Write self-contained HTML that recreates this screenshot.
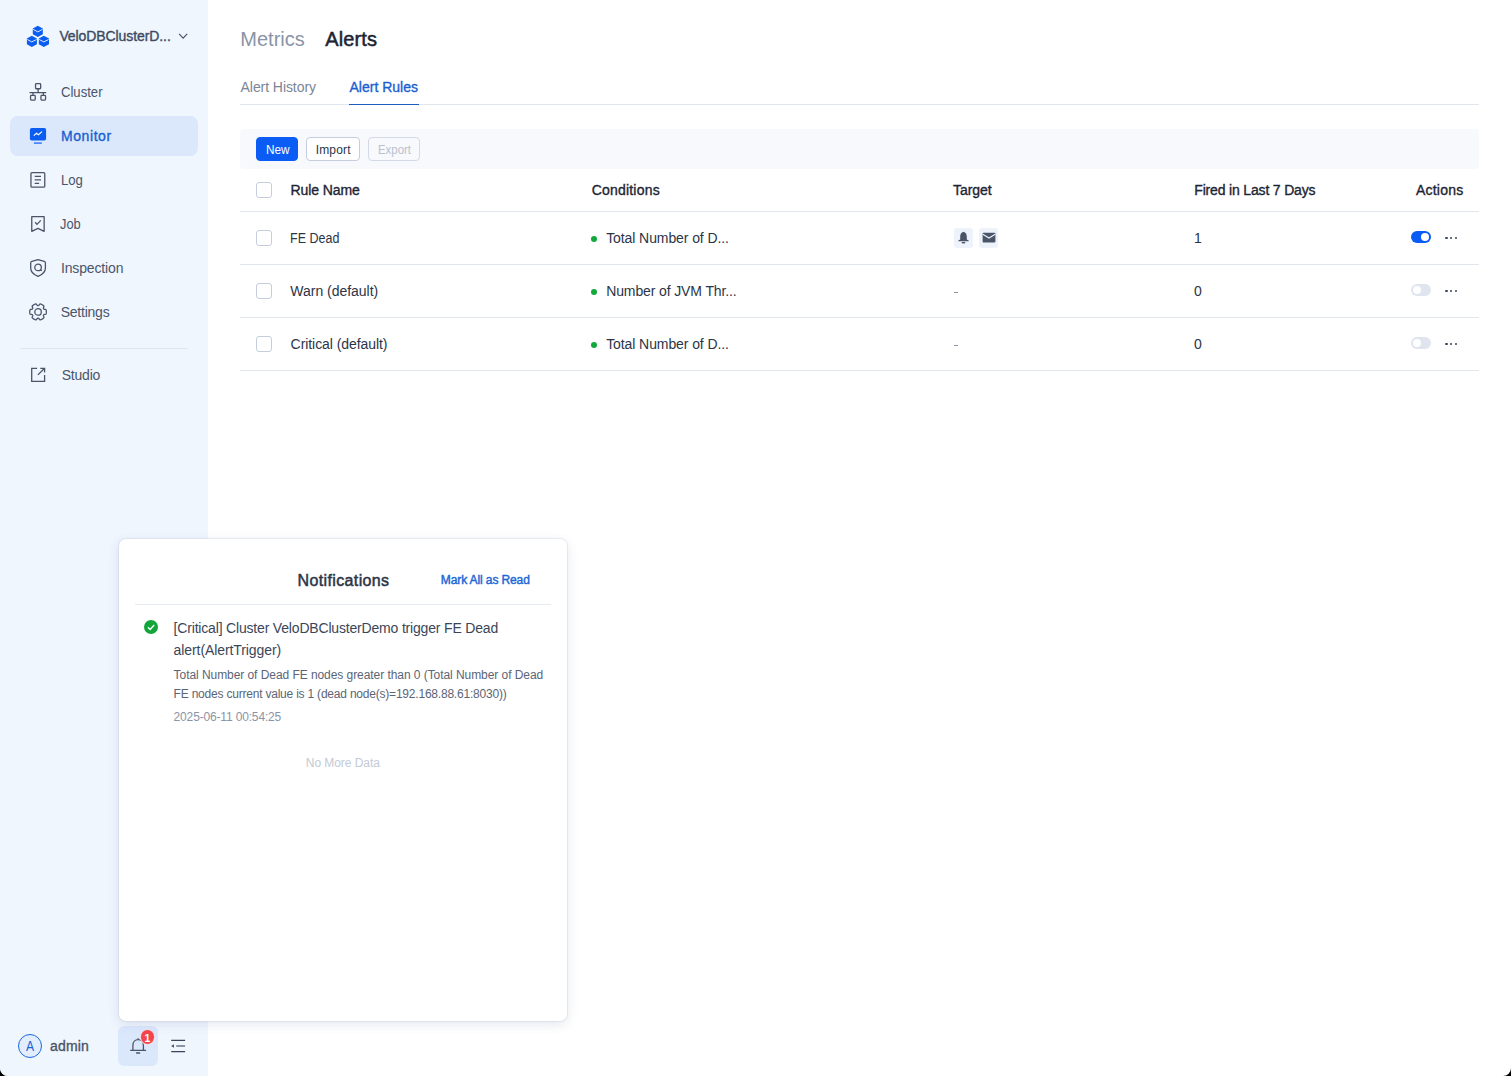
<!DOCTYPE html>
<html lang="en">
<head>
<meta charset="utf-8">
<title>Alerts</title>
<style>
*{box-sizing:border-box;margin:0;padding:0}
html,body{width:1511px;height:1076px;overflow:hidden;background:#000}
body{font-family:"Liberation Sans",sans-serif;color:#3a4659;position:relative}
#app{position:absolute;left:0;top:0;width:1511px;height:1076px;background:#fff;border-radius:0 0 8px 8px;overflow:hidden}
.abs{position:absolute;white-space:nowrap}
#side{position:absolute;left:0;top:0;width:208px;height:1076px;background:#f0f6fe}
.t{position:absolute;white-space:pre;line-height:20px}
.s{-webkit-text-stroke:0.35px currentColor}
.s2{-webkit-text-stroke:0.5px currentColor}
.s3{-webkit-text-stroke:0.42px currentColor}
.b{font-weight:bold}
#active{position:absolute;left:10px;top:116px;width:188px;height:40px;border-radius:8px;background:#dbe8fc}
.hr{position:absolute;background:#e1e6ef;height:1px}
.cb{position:absolute;left:256px;width:16px;height:16px;border:1px solid #c5cedd;border-radius:3px;background:#fff}
.dot{position:absolute;left:590.7px;width:6.7px;height:6.7px;border-radius:50%;background:#12a83a}
.sw{position:absolute;left:1411px;width:20px;height:12px;border-radius:6px;background:#dfe4ee}
.sw i{position:absolute;left:1.8px;top:1.8px;width:8.4px;height:8.4px;border-radius:50%;background:#fff}
.sw.on{background:#0b5cf5}
.sw.on i{left:9.8px}
.more{position:absolute;left:1445.4px;width:12px;height:2.4px}
.more b{position:absolute;top:0;width:2.4px;height:2.4px;border-radius:50%;background:#3a4659}
.btn{position:absolute;top:137px;height:24px;border-radius:4px;border:1px solid #c5cedd;background:#fff}
.dash{position:absolute;left:954px;width:4px;height:1px;background:#8a94a6}
#pop{position:absolute;left:119px;top:539px;width:448px;height:482px;background:#fff;border-radius:7px;box-shadow:0 0 0 1px rgba(190,200,220,.3),0 3px 12px rgba(60,80,130,.14)}
</style>
</head>
<body>
<div id="app">

<!-- SIDEBAR -->
<div id="side">
  <svg class="abs" style="left:26px;top:24px" width="24" height="24" viewBox="0 0 24 24">
    <g fill="#0b5cf0">
      <path d="M11.8 1.8 L16.8 4.4 V10.2 L11.8 12.9 L6.8 10.2 V4.4 Z"/>
      <path d="M5.8 11.8 L10.9 14.5 V20.3 L5.8 23 L0.9 20.3 V14.5 Z"/>
      <path d="M17.8 11.8 L23 14.5 V20.3 L17.8 23 L12.8 20.3 V14.5 Z"/>
    </g>
    <g fill="none" stroke="#dcebff" stroke-width="1">
      <path d="M7.2 5.4 L11.8 7.9 L16.4 5.4"/>
      <path d="M1.3 15.5 L5.8 17.9 L10.5 15.5"/>
      <path d="M13.2 15.5 L17.8 17.9 L22.6 15.5"/>
    </g>
  </svg>
  <div id="sbt" class="t s" style="left:59.4px;top:25.8px;font-size:14px;color:#3d4a5f;letter-spacing:-0.09px">VeloDBClusterD...</div>
  <svg class="abs" style="left:177px;top:31px" width="12" height="10" viewBox="0 0 12 10"><path d="M2.1 2.9 L6.15 7.2 L10.2 2.9" fill="none" stroke="#4a5568" stroke-width="1.2"/></svg>

  <div id="active"></div>

  <!-- Cluster -->
  <svg class="abs" style="left:27px;top:81px" width="22" height="22" viewBox="0 0 22 22" fill="none" stroke="#4a5568" stroke-width="1.3"><rect x="8.55" y="2.65" width="5.1" height="5.1" rx="0.8"/><rect x="3.55" y="14.35" width="4.7" height="4.8" rx="0.8"/><rect x="13.95" y="14.35" width="4.6" height="4.8" rx="0.8"/><path d="M11.1 7.75 V11.7 M2.5 11.7 H19.2 M5.95 11.7 V14.35 M16.35 11.7 V14.35"/></svg>
  <div id="m1" class="t" style="left:60.5px;top:82.0px;font-size:14px;color:#4a5568;transform:scaleX(0.936);transform-origin:0 0">Cluster</div>

  <!-- Monitor -->
  <svg class="abs" style="left:27px;top:125px" width="22" height="22" viewBox="0 0 22 22"><rect x="2.9" y="3" width="16.2" height="12.5" rx="1.8" fill="#0b5cf0"/><path d="M6.9 18.1 H14.8" stroke="#3d7df5" stroke-width="1.6" fill="none"/><path d="M6.8 10.6 L9.4 8.3 L11.4 9.7 L15 6.6" stroke="#fff" stroke-width="1.2" fill="none"/></svg>
  <div id="m2" class="t s" style="left:60.9px;top:126.0px;font-size:14px;color:#1a5fd0;letter-spacing:0.6px">Monitor</div>

  <!-- Log -->
  <svg class="abs" style="left:27px;top:169px" width="22" height="22" viewBox="0 0 22 22" fill="none" stroke="#4a5568" stroke-width="1.3"><rect x="3.95" y="3.55" width="13.8" height="14.6" rx="1"/><path d="M7.7 7.3 H14 M7.7 10.9 H14 M7.7 14.3 H12.1"/></svg>
  <div id="m3" class="t" style="left:60.7px;top:170.0px;font-size:14px;color:#4a5568;transform:scaleX(0.939);transform-origin:0 0">Log</div>

  <!-- Job -->
  <svg class="abs" style="left:27px;top:213px" width="22" height="22" viewBox="0 0 22 22" fill="none" stroke="#4a5568" stroke-width="1.3"><path d="M4.75 3.65 H17.15 V18.3 L10.95 15.3 L4.75 18.3 Z" stroke-linejoin="round"/><path d="M8.1 9.3 L10 11.4 L13.8 7.4"/></svg>
  <div id="m4" class="t" style="left:60.1px;top:214.0px;font-size:14px;color:#4a5568;transform:scaleX(0.917);transform-origin:0 0">Job</div>

  <!-- Inspection -->
  <svg class="abs" style="left:27px;top:257px" width="22" height="22" viewBox="0 0 22 22" fill="none" stroke="#4a5568" stroke-width="1.3"><path d="M11.05 2.6 L4.9 4.45 Q3.7 4.8 3.7 6 V11 C3.7 15 7 17.8 11.05 19.4 C15.1 17.8 18.4 15 18.4 11 V6 Q18.4 4.8 17.2 4.45 Z" stroke-linejoin="round"/><circle cx="11.05" cy="10.4" r="3.25"/><path d="M13.35 12.7 L14.9 13.8"/></svg>
  <div id="m5" class="t" style="left:60.9px;top:258.0px;font-size:14px;color:#4a5568;letter-spacing:-0.14px">Inspection</div>

  <!-- Settings -->
  <svg class="abs" style="left:27px;top:301px" width="22" height="22" viewBox="0 0 22 22" fill="none" stroke="#4a5568" stroke-width="1.3"><g transform="translate(11.05 10.9)"><path d="M0.00 -6.33 L0.11 -6.34 L0.22 -6.35 L0.33 -6.36 L0.45 -6.40 L0.56 -6.45 L0.69 -6.53 L0.82 -6.65 L0.96 -6.82 L1.12 -7.04 L1.29 -7.29 L1.46 -7.53 L1.64 -7.73 L1.81 -7.85 L1.98 -7.92 L2.13 -7.95 L2.28 -7.94 L2.42 -7.92 L2.56 -7.88 L2.70 -7.84 L2.84 -7.80 L2.97 -7.75 L3.11 -7.69 L3.24 -7.64 L3.38 -7.58 L3.51 -7.52 L3.64 -7.46 L3.77 -7.40 L3.90 -7.33 L4.02 -7.26 L4.15 -7.19 L4.27 -7.11 L4.40 -7.04 L4.52 -6.96 L4.64 -6.88 L4.76 -6.80 L4.88 -6.71 L4.99 -6.63 L5.11 -6.54 L5.22 -6.45 L5.33 -6.36 L5.44 -6.26 L5.55 -6.16 L5.65 -6.05 L5.74 -5.94 L5.82 -5.82 L5.87 -5.67 L5.90 -5.50 L5.87 -5.29 L5.79 -5.04 L5.67 -4.76 L5.54 -4.49 L5.43 -4.24 L5.35 -4.03 L5.31 -3.86 L5.30 -3.71 L5.32 -3.59 L5.35 -3.47 L5.38 -3.36 L5.43 -3.26 L5.48 -3.17 L5.54 -3.07 L5.61 -2.98 L5.68 -2.89 L5.76 -2.81 L5.87 -2.74 L6.00 -2.67 L6.17 -2.62 L6.39 -2.58 L6.66 -2.56 L6.96 -2.53 L7.26 -2.50 L7.51 -2.44 L7.71 -2.36 L7.85 -2.25 L7.95 -2.13 L8.01 -2.00 L8.07 -1.86 L8.11 -1.72 L8.14 -1.58 L8.17 -1.44 L8.20 -1.30 L8.22 -1.15 L8.24 -1.01 L8.25 -0.87 L8.27 -0.72 L8.28 -0.58 L8.29 -0.43 L8.29 -0.29 L8.30 -0.14 L8.30 -0.00 L8.30 0.14 L8.29 0.29 L8.29 0.43 L8.28 0.58 L8.27 0.72 L8.25 0.87 L8.24 1.01 L8.22 1.15 L8.20 1.30 L8.17 1.44 L8.14 1.58 L8.11 1.72 L8.07 1.86 L8.01 2.00 L7.95 2.13 L7.85 2.25 L7.71 2.36 L7.51 2.44 L7.26 2.50 L6.96 2.53 L6.66 2.56 L6.39 2.58 L6.17 2.62 L6.00 2.67 L5.87 2.74 L5.76 2.81 L5.68 2.89 L5.61 2.98 L5.54 3.07 L5.48 3.17 L5.43 3.26 L5.38 3.36 L5.35 3.47 L5.32 3.59 L5.30 3.71 L5.31 3.86 L5.35 4.03 L5.43 4.24 L5.54 4.49 L5.67 4.76 L5.79 5.04 L5.87 5.29 L5.90 5.50 L5.87 5.67 L5.82 5.82 L5.74 5.94 L5.65 6.05 L5.55 6.16 L5.44 6.26 L5.33 6.36 L5.22 6.45 L5.11 6.54 L4.99 6.63 L4.88 6.71 L4.76 6.80 L4.64 6.88 L4.52 6.96 L4.40 7.04 L4.27 7.11 L4.15 7.19 L4.02 7.26 L3.90 7.33 L3.77 7.40 L3.64 7.46 L3.51 7.52 L3.38 7.58 L3.24 7.64 L3.11 7.69 L2.97 7.75 L2.84 7.80 L2.70 7.84 L2.56 7.88 L2.42 7.92 L2.28 7.94 L2.13 7.95 L1.98 7.92 L1.81 7.85 L1.64 7.73 L1.46 7.53 L1.29 7.29 L1.12 7.04 L0.96 6.82 L0.82 6.65 L0.69 6.53 L0.56 6.45 L0.45 6.40 L0.33 6.36 L0.22 6.35 L0.11 6.34 L0.00 6.33 L-0.11 6.34 L-0.22 6.35 L-0.33 6.36 L-0.45 6.40 L-0.56 6.45 L-0.69 6.53 L-0.82 6.65 L-0.96 6.82 L-1.12 7.04 L-1.29 7.29 L-1.46 7.53 L-1.64 7.73 L-1.81 7.85 L-1.98 7.92 L-2.13 7.95 L-2.28 7.94 L-2.42 7.92 L-2.56 7.88 L-2.70 7.84 L-2.84 7.80 L-2.97 7.75 L-3.11 7.69 L-3.24 7.64 L-3.38 7.58 L-3.51 7.52 L-3.64 7.46 L-3.77 7.40 L-3.90 7.33 L-4.02 7.26 L-4.15 7.19 L-4.27 7.11 L-4.40 7.04 L-4.52 6.96 L-4.64 6.88 L-4.76 6.80 L-4.88 6.71 L-4.99 6.63 L-5.11 6.54 L-5.22 6.45 L-5.33 6.36 L-5.44 6.26 L-5.55 6.16 L-5.65 6.05 L-5.74 5.94 L-5.82 5.82 L-5.87 5.67 L-5.90 5.50 L-5.87 5.29 L-5.79 5.04 L-5.67 4.76 L-5.54 4.49 L-5.43 4.24 L-5.35 4.03 L-5.31 3.86 L-5.30 3.71 L-5.32 3.59 L-5.35 3.47 L-5.38 3.36 L-5.43 3.26 L-5.48 3.17 L-5.54 3.07 L-5.61 2.98 L-5.68 2.89 L-5.76 2.81 L-5.87 2.74 L-6.00 2.67 L-6.17 2.62 L-6.39 2.58 L-6.66 2.56 L-6.96 2.53 L-7.26 2.50 L-7.51 2.44 L-7.71 2.36 L-7.85 2.25 L-7.95 2.13 L-8.01 2.00 L-8.07 1.86 L-8.11 1.72 L-8.14 1.58 L-8.17 1.44 L-8.20 1.30 L-8.22 1.15 L-8.24 1.01 L-8.25 0.87 L-8.27 0.72 L-8.28 0.58 L-8.29 0.43 L-8.29 0.29 L-8.30 0.14 L-8.30 0.00 L-8.30 -0.14 L-8.29 -0.29 L-8.29 -0.43 L-8.28 -0.58 L-8.27 -0.72 L-8.25 -0.87 L-8.24 -1.01 L-8.22 -1.15 L-8.20 -1.30 L-8.17 -1.44 L-8.14 -1.58 L-8.11 -1.72 L-8.07 -1.86 L-8.01 -2.00 L-7.95 -2.13 L-7.85 -2.25 L-7.71 -2.36 L-7.51 -2.44 L-7.26 -2.50 L-6.96 -2.53 L-6.66 -2.56 L-6.39 -2.58 L-6.17 -2.62 L-6.00 -2.67 L-5.87 -2.74 L-5.76 -2.81 L-5.68 -2.89 L-5.61 -2.98 L-5.54 -3.07 L-5.48 -3.17 L-5.43 -3.26 L-5.38 -3.36 L-5.35 -3.47 L-5.32 -3.59 L-5.30 -3.71 L-5.31 -3.86 L-5.35 -4.03 L-5.43 -4.24 L-5.54 -4.49 L-5.67 -4.76 L-5.79 -5.04 L-5.87 -5.29 L-5.90 -5.50 L-5.87 -5.67 L-5.82 -5.82 L-5.74 -5.94 L-5.65 -6.05 L-5.55 -6.16 L-5.44 -6.26 L-5.33 -6.36 L-5.22 -6.45 L-5.11 -6.54 L-4.99 -6.63 L-4.88 -6.71 L-4.76 -6.80 L-4.64 -6.88 L-4.52 -6.96 L-4.40 -7.04 L-4.27 -7.11 L-4.15 -7.19 L-4.02 -7.26 L-3.90 -7.33 L-3.77 -7.40 L-3.64 -7.46 L-3.51 -7.52 L-3.38 -7.58 L-3.24 -7.64 L-3.11 -7.69 L-2.97 -7.75 L-2.84 -7.80 L-2.70 -7.84 L-2.56 -7.88 L-2.42 -7.92 L-2.28 -7.94 L-2.13 -7.95 L-1.98 -7.92 L-1.81 -7.85 L-1.64 -7.73 L-1.46 -7.53 L-1.29 -7.29 L-1.12 -7.04 L-0.96 -6.82 L-0.82 -6.65 L-0.69 -6.53 L-0.56 -6.45 L-0.45 -6.40 L-0.33 -6.36 L-0.22 -6.35 L-0.11 -6.34 L-0.00 -6.33 Z" stroke-linejoin="round"/></g><circle cx="11.05" cy="10.9" r="3.25"/></svg>
  <div id="m6" class="t" style="left:60.7px;top:302.0px;font-size:14px;color:#4a5568;letter-spacing:-0.23px">Settings</div>

  <div class="hr" style="left:20px;top:348px;width:168px;background:#dfe6f0"></div>

  <!-- Studio -->
  <svg class="abs" style="left:27px;top:364px" width="22" height="22" viewBox="0 0 22 22" fill="none" stroke="#4a5568" stroke-width="1.3"><path d="M10.1 4.3 H4.7 V17.4 H17.6 V10.9"/><path d="M13.3 4.3 H17.6 V8.6 M17.6 4.3 L10.9 10.9"/></svg>
  <div id="m7" class="t" style="left:61.7px;top:364.7px;font-size:14px;color:#4a5568;letter-spacing:-0.2px">Studio</div>

  <!-- bottom -->
  <div class="abs" style="left:18px;top:1034px;width:24px;height:24px;border-radius:50%;border:1px solid #1a66e0;background:#e2eefe"></div>
  <div id="avA" class="t" style="left:25.9px;top:1035.8px;font-size:14px;color:#1a5fd0;transform:scaleX(0.87);transform-origin:0 0">A</div>
  <div id="adm" class="t s" style="left:50.1px;top:1035.8px;font-size:14px;color:#4a5568;letter-spacing:0.16px">admin</div>
  <div class="abs" style="left:118px;top:1026px;width:40px;height:40px;border-radius:6px;background:#dbe8fc"></div>
  <svg class="abs" style="left:128px;top:1036px" width="20" height="20" viewBox="0 0 20 20" fill="none" stroke="#4a5568" stroke-width="1.3"><path d="M2.2 14.4 H18.1 M4.9 14.4 V9.4 C4.9 6 7.2 3.7 10.15 3.7 C13.1 3.7 15.4 6 15.4 9.4 V14.4 M10.15 3.7 V2.3 M8.1 17 H12.1"/></svg>
  <div class="abs" style="left:139.95px;top:1029.45px;width:15.2px;height:15.2px;border-radius:50%;background:#f5454c;border:0.8px solid #f4f0f8"></div>
  <div class="t b" style="left:144.5px;top:1028.3px;font-size:10.5px;color:#fff">1</div>
  <svg class="abs" style="left:168px;top:1036px" width="20" height="20" viewBox="0 0 20 20" fill="none" stroke="#3a4659" stroke-width="1.3"><path d="M3.2 4.4 H17.1 M3.2 15.6 H17.1"/><path d="M8.2 10 H17.1" stroke="#6b7587"/><path d="M5.9 8.2 V11.8 L3.2 10 Z" fill="#3a4659" stroke="none"/></svg>
</div>

<!-- MAIN -->
<div id="h1" class="t" style="left:240.2px;top:28.8px;font-size:20px;color:#8a94a6;letter-spacing:0.04px">Metrics</div>
<div id="h2" class="t s2" style="left:325.3px;top:28.8px;font-size:20px;color:#1d2433;letter-spacing:0.12px">Alerts</div>
<div id="tb1" class="t" style="left:240.6px;top:77.1px;font-size:14px;color:#7b8596;letter-spacing:-0.07px">Alert History</div>
<div id="tb2" class="t s" style="left:349.5px;top:77.1px;font-size:14px;color:#1a5fd0">Alert Rules</div>
<div class="hr" style="left:240px;top:104px;width:1239px"></div>
<div class="abs" style="left:349.2px;top:103.7px;width:69.7px;height:1.8px;background:#1f5cc4"></div>

<div class="abs" style="left:240px;top:129px;width:1239px;height:40px;border-radius:4px;background:#f7f9fd"></div>
<div class="btn" style="left:256px;width:42px;background:#0b5cf5;border-color:#0b5cf5"></div>
<div class="btn" style="left:306px;width:54px"></div>
<div class="btn" style="left:368px;width:52px;border-color:#d3dae6;background:#f7f9fd"></div>
<div id="b1" class="t" style="left:265.6px;top:139.9px;font-size:12px;color:#ffffff;transform:scaleX(0.983);transform-origin:0 0">New</div>
<div id="b2" class="t" style="left:315.7px;top:139.9px;font-size:12px;color:#2b3547;letter-spacing:0.16px">Import</div>
<div id="b3" class="t" style="left:377.7px;top:139.9px;font-size:12px;color:#b9c1cf;transform:scaleX(0.951);transform-origin:0 0">Export</div>

<!-- header -->
<div class="cb" style="top:182px"></div>
<div id="th1" class="t s" style="left:290.4px;top:179.8px;font-size:14px;color:#1d2433;letter-spacing:-0.07px">Rule Name</div>
<div id="th2" class="t s" style="left:591.7px;top:179.8px;font-size:14px;color:#1d2433;letter-spacing:0.2px">Conditions</div>
<div id="th3" class="t s" style="left:953.1px;top:179.8px;font-size:14px;color:#1d2433;letter-spacing:-0.08px">Target</div>
<div id="th4" class="t s" style="left:1194.3px;top:179.8px;font-size:14px;color:#1d2433;letter-spacing:-0.17px">Fired in Last 7 Days</div>
<div id="th5" class="t s" style="left:1415.9px;top:179.8px;font-size:14px;color:#1d2433;letter-spacing:0.23px">Actions</div>
<div class="hr" style="left:240px;top:211px;width:1239px"></div>

<!-- row 1 -->
<div class="cb" style="top:230px"></div>
<div id="r1a" class="t" style="left:290.0px;top:227.8px;font-size:14px;color:#2b3547;transform:scaleX(0.893);transform-origin:0 0">FE Dead</div>
<div class="dot" style="top:235.6px"></div>
<div id="r1b" class="t" style="left:606.2px;top:227.8px;font-size:14px;color:#2b3547;letter-spacing:-0.09px">Total Number of D...</div>
<div class="abs" style="left:953.6px;top:228px;width:19.6px;height:19.9px;border-radius:3px;background:#eef2fa"></div>
<svg class="abs" style="left:957px;top:231px" width="13" height="14" viewBox="0 0 13 14"><path d="M6.5 0.8 C4.2 1.4 3.2 3.4 3.2 5.8 V8.4 L1.3 9.6 V10.2 H11.7 V9.6 L9.8 8.4 V5.8 C9.8 3.4 8.8 1.4 6.5 0.8 Z M4.6 10.9 H8.4 C8.2 11.9 7.5 12.4 6.5 12.4 C5.5 12.4 4.8 11.9 4.6 10.9 Z" fill="#4a5568"/></svg>
<div class="abs" style="left:978.8px;top:228px;width:19.6px;height:19.9px;border-radius:3px;background:#eef2fa"></div>
<svg class="abs" style="left:981.5px;top:232px" width="14" height="11" viewBox="0 0 14 11"><path d="M1.5 0.8 H12.5 C13 0.8 13.4 1.2 13.4 1.7 V9.5 C13.4 10 13 10.4 12.5 10.4 H1.5 C1 10.4 0.6 10 0.6 9.5 V1.7 C0.6 1.2 1 0.8 1.5 0.8 Z" fill="#4a5568"/><path d="M0.8 2.3 L7 6 L13.2 2.3" fill="none" stroke="#eef2fa" stroke-width="1.1"/></svg>
<div id="r1d" class="t" style="left:1194.1px;top:227.8px;font-size:14px;color:#2b3547">1</div>
<div class="sw on" style="top:231px"><i></i></div>
<div class="more" style="top:236.5px"><b style="left:0"></b><b style="left:4.7px"></b><b style="left:9.4px"></b></div>
<div class="hr" style="left:240px;top:264px;width:1239px"></div>

<!-- row 2 -->
<div class="cb" style="top:283px"></div>
<div id="r2a" class="t" style="left:290.3px;top:280.8px;font-size:14px;color:#2b3547;letter-spacing:-0.02px">Warn (default)</div>
<div class="dot" style="top:288.6px"></div>
<div id="r2b" class="t" style="left:606.2px;top:280.8px;font-size:14px;color:#2b3547;letter-spacing:-0.12px">Number of JVM Thr...</div>
<div class="dash" style="top:292px"></div>
<div id="r2d" class="t" style="left:1193.9px;top:280.8px;font-size:14px;color:#2b3547">0</div>
<div class="sw" style="top:284px"><i></i></div>
<div class="more" style="top:289.5px"><b style="left:0"></b><b style="left:4.7px"></b><b style="left:9.4px"></b></div>
<div class="hr" style="left:240px;top:317px;width:1239px"></div>

<!-- row 3 -->
<div class="cb" style="top:336px"></div>
<div id="r3a" class="t" style="left:290.6px;top:333.8px;font-size:14px;color:#2b3547;letter-spacing:-0.07px">Critical (default)</div>
<div class="dot" style="top:341.6px"></div>
<div id="r3b" class="t" style="left:606.2px;top:333.8px;font-size:14px;color:#2b3547;letter-spacing:-0.09px">Total Number of D...</div>
<div class="dash" style="top:345px"></div>
<div id="r3d" class="t" style="left:1193.9px;top:333.8px;font-size:14px;color:#2b3547">0</div>
<div class="sw" style="top:337px"><i></i></div>
<div class="more" style="top:342.5px"><b style="left:0"></b><b style="left:4.7px"></b><b style="left:9.4px"></b></div>
<div class="hr" style="left:240px;top:370px;width:1239px"></div>

<!-- POPOVER -->
<div id="pop"></div>
<div id="pt" class="t s2" style="left:297.5px;top:571.1px;font-size:16px;color:#2b3547;letter-spacing:0.37px">Notifications</div>
<div id="pm" class="t s3" style="left:440.8px;top:570.1px;font-size:12px;color:#1a66d6;letter-spacing:-0.11px">Mark All as Read</div>
<div class="hr" style="left:135px;top:604px;width:416px;background:#e6eaf1"></div>
<svg class="abs" style="left:144px;top:620px" width="14" height="14" viewBox="0 0 14 14"><circle cx="7" cy="7" r="7" fill="#12a63a"/><path d="M3.9 7.3 L6.1 9.4 L10.2 5.1" fill="none" stroke="#fff" stroke-width="1.4"/></svg>
<div id="n1" class="t" style="left:173.6px;top:617.8px;font-size:14px;color:#3a4659;letter-spacing:-0.18px">[Critical] Cluster VeloDBClusterDemo trigger FE Dead</div>
<div id="n2" class="t" style="left:173.6px;top:640.0px;font-size:14px;color:#3a4659;letter-spacing:-0.09px">alert(AlertTrigger)</div>
<div id="d1" class="t" style="left:173.6px;top:664.8px;font-size:12px;color:#5b6576;letter-spacing:-0.06px">Total Number of Dead FE nodes greater than 0 (Total Number of Dead</div>
<div id="d2" class="t" style="left:173.6px;top:683.8px;font-size:12px;color:#5b6576;letter-spacing:-0.21px">FE nodes current value is 1 (dead node(s)=192.168.88.61:8030))</div>
<div id="ts" class="t" style="left:173.6px;top:706.5px;font-size:12px;color:#8a94a6;letter-spacing:-0.16px">2025-06-11 00:54:25</div>
<div id="nm" class="t" style="left:305.8px;top:752.9px;font-size:12px;color:#c3cad6;letter-spacing:-0.06px">No More Data</div>

</div>
</body>
</html>
